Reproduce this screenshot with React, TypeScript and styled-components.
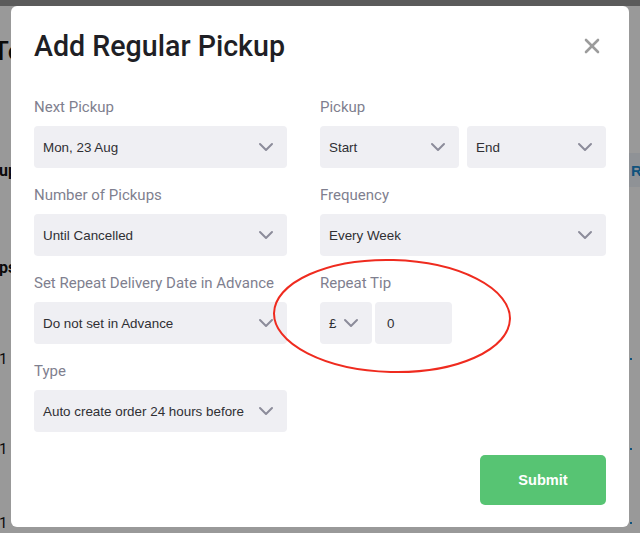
import React from "react";
import styled, { createGlobalStyle } from "styled-components";
import { ChevronDown, X } from "lucide-react";

const GlobalStyle = createGlobalStyle`
  html, body {
    margin: 0;
    padding: 0;
    width: 640px;
    height: 533px;
    overflow: hidden;
    background: #ffffff;
    font-family: "Liberation Sans", Arial, sans-serif;
  }
  * { box-sizing: border-box; }
`;

/* ---------- background page (under the dim overlay) ---------- */

const Page = styled.div`
  width: 640px;
  height: 533px;
  display: flex;
  flex-direction: column;
  background: #ffffff;
  color: #111;
  overflow: hidden;
`;

const TopBar = styled.div`
  height: 6px;
  flex: none;
  background: #989898;
`;

const PageTitle = styled.h1`
  margin: 30px 0 0 -7px;
  font-family: Roboto, "Liberation Sans", sans-serif;
  font-weight: 500;
  font-size: 26px;
  line-height: 30px;
  white-space: nowrap;
`;

const PageRow = styled.div<{ $top: number; $height: number }>`
  margin-top: ${(p) => p.$top}px;
  height: ${(p) => p.$height}px;
  display: flex;
  align-items: center;
  justify-content: space-between;
  flex: none;
`;

const RowText = styled.span<{ $bold?: boolean; $size: number }>`
  margin-left: -1px;
  font-family: Roboto, "Liberation Sans", sans-serif;
  font-weight: ${(p) => (p.$bold ? 700 : 400)};
  font-size: ${(p) => p.$size}px;
  color: #111;
`;

const TabBand = styled.div`
  align-self: stretch;
  width: 13px;
  display: flex;
  align-items: center;
  padding-left: 4px;
  background: #eef4fb;
  color: #1b8ad0;
  font-weight: 700;
  font-size: 15px;
`;

const LinkDot = styled.span`
  width: 2px;
  height: 2px;
  margin-right: 8px;
  background: #1b8ad0;
`;

/* ---------- overlay + modal ---------- */

const Overlay = styled.div`
  position: fixed;
  inset: 0;
  background: rgba(0, 0, 0, 0.4);
  display: flex;
  align-items: flex-start;
  padding: 6px 0 0 11px;
`;

const Modal = styled.div`
  width: 618px;
  background: #ffffff;
  border-radius: 6px;
  padding: 20px 23px 22px 23px;
  display: flex;
  flex-direction: column;
`;

const Header = styled.div`
  display: flex;
  align-items: center;
  justify-content: space-between;
  height: 40px;
`;

const Title = styled.h2`
  margin: 0;
  font-family: Roboto, "Liberation Sans", sans-serif;
  font-weight: 500;
  font-size: 28.6px;
  line-height: 40px;
  color: #1f1f25;
`;

const CloseButton = styled.button`
  width: 24px;
  height: 24px;
  margin-right: 2px;
  padding: 0;
  border: none;
  background: transparent;
  color: #9c9c9c;
  display: flex;
  align-items: center;
  justify-content: center;
  cursor: pointer;
`;

const Form = styled.div`
  margin-top: 31px;
  display: grid;
  grid-template-columns: 253px 286px;
  column-gap: 33px;
  row-gap: 17px;
  align-items: start;
`;

const Field = styled.div`
  position: relative;
  display: flex;
  flex-direction: column;
`;

const Label = styled.label`
  font-family: Roboto, "Liberation Sans", sans-serif;
  font-size: 15px;
  line-height: 20px;
  color: #7f7f8f;
  margin-bottom: 9px;
  white-space: nowrap;
`;

const Controls = styled.div`
  display: flex;
  gap: 8px;
`;

const TipControls = styled.div`
  display: flex;
  gap: 3px;
`;

const Select = styled.div<{ $width?: number; $grow?: boolean }>`
  height: 42px;
  flex: ${(p) => (p.$grow ? "1 1 0" : "none")};
  width: ${(p) => (p.$width ? `${p.$width}px` : "auto")};
  background: #efeff3;
  border-radius: 4px;
  display: flex;
  align-items: center;
  justify-content: space-between;
  padding: 0 9px 0 9px;
  font-size: 13.4px;
  color: #2f2f33;
  white-space: nowrap;
  overflow: hidden;
`;

const Chevron = styled(ChevronDown)`
  flex: none;
  color: #8c8c9a;
`;

const Input = styled.div<{ $width: number }>`
  height: 42px;
  width: ${(p) => p.$width}px;
  background: #efeff3;
  border-radius: 4px;
  display: flex;
  align-items: center;
  padding-left: 12px;
  font-size: 13.4px;
  color: #2f2f33;
`;

const Annotation = styled.svg`
  position: absolute;
  left: -49px;
  top: -16px;
  width: 242px;
  height: 118px;
  pointer-events: none;
  overflow: visible;
`;

const Footer = styled.div`
  margin-top: 23px;
  display: flex;
  justify-content: flex-end;
`;

const SubmitButton = styled.button`
  width: 126px;
  height: 50px;
  border: none;
  border-radius: 5px;
  background: #57c473;
  color: #ffffff;
  font-family: "Liberation Sans", Arial, sans-serif;
  font-weight: 700;
  font-size: 14.6px;
  cursor: pointer;
`;

function SelectBox({ value, width, grow }: { value: string; width?: number; grow?: boolean }) {
  return (
    <Select $width={width} $grow={grow}>
      <span>{value}</span>
      <Chevron size={24} strokeWidth={2} />
    </Select>
  );
}

export default function App() {
  return (
    <>
      <GlobalStyle />
      <Page>
        <TopBar />
        <PageTitle>Te</PageTitle>
        <PageRow $top={87} $height={34}>
          <RowText $bold $size={16}>up</RowText>
          <TabBand>R</TabBand>
        </PageRow>
        <PageRow $top={67} $height={26}>
          <RowText $bold $size={16}>ps</RowText>
        </PageRow>
        <PageRow $top={66} $height={26}>
          <RowText $size={15}>1</RowText>
          <LinkDot />
        </PageRow>
        <PageRow $top={64} $height={26}>
          <RowText $size={15}>1</RowText>
          <LinkDot />
        </PageRow>
        <PageRow $top={48} $height={26}>
          <RowText $size={15}>1</RowText>
          <LinkDot />
        </PageRow>
      </Page>

      <Overlay>
        <Modal>
          <Header>
            <Title>Add Regular Pickup</Title>
            <CloseButton aria-label="Close">
              <X size={24} strokeWidth={2.6} />
            </CloseButton>
          </Header>

          <Form>
            <Field>
              <Label>Next Pickup</Label>
              <SelectBox value="Mon, 23 Aug" />
            </Field>
            <Field>
              <Label>Pickup</Label>
              <Controls>
                <SelectBox value="Start" grow />
                <SelectBox value="End" grow />
              </Controls>
            </Field>

            <Field>
              <Label>Number of Pickups</Label>
              <SelectBox value="Until Cancelled" />
            </Field>
            <Field>
              <Label>Frequency</Label>
              <SelectBox value="Every Week" />
            </Field>

            <Field>
              <Label>Set Repeat Delivery Date in Advance</Label>
              <SelectBox value="Do not set in Advance" />
            </Field>
            <Field>
              <Label>Repeat Tip</Label>
              <TipControls>
                <SelectBox value="£" width={52} />
                <Input $width={77}>0</Input>
              </TipControls>
              <Annotation viewBox="0 0 242 118">
                <ellipse
                  cx="121"
                  cy="59"
                  rx="118"
                  ry="56"
                  fill="none"
                  stroke="#ef2b1f"
                  strokeWidth="2"
                  transform="rotate(1.5 121 59)"
                />
              </Annotation>
            </Field>

            <Field>
              <Label>Type</Label>
              <SelectBox value="Auto create order 24 hours before" />
            </Field>
          </Form>

          <Footer>
            <SubmitButton>Submit</SubmitButton>
          </Footer>
        </Modal>
      </Overlay>
    </>
  );
}
